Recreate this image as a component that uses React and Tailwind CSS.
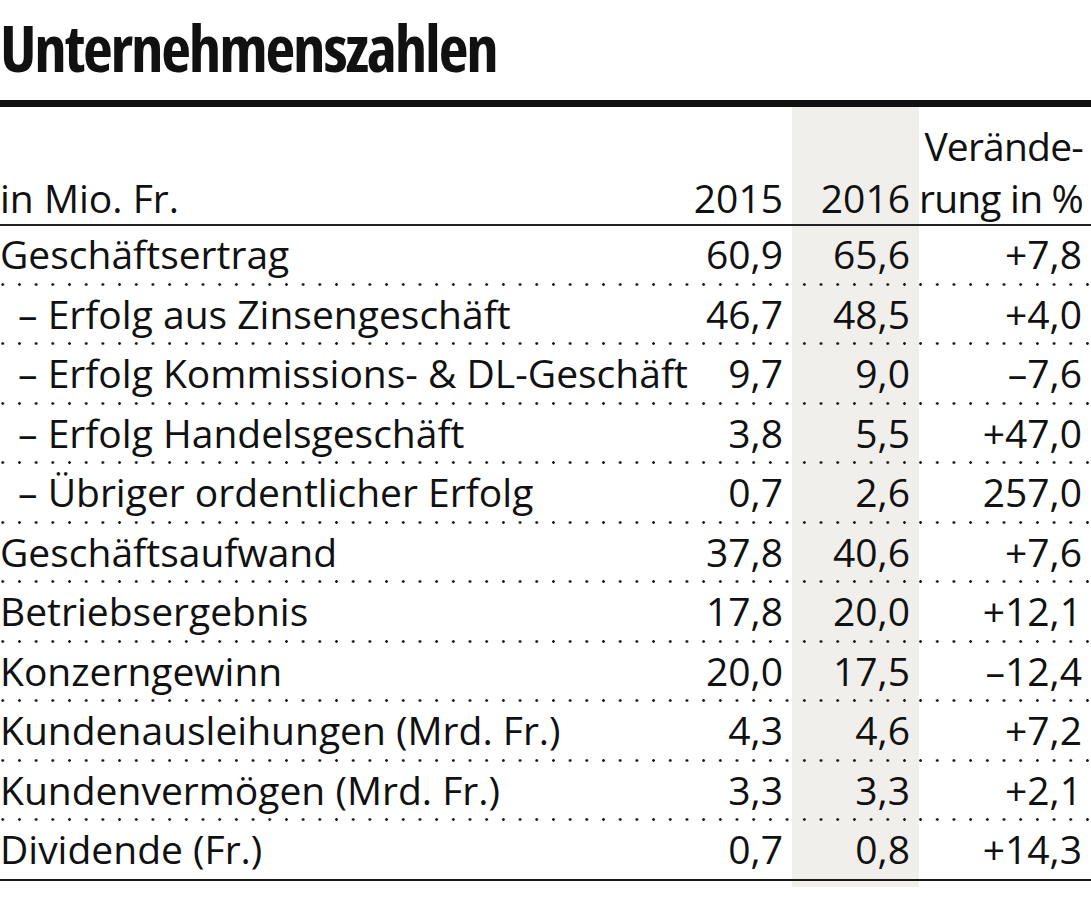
const rows = [
  { label: 'Geschäftsertrag', a: '60,9', b: '65,6', c: '+7,8' },
  { label: '– Erfolg aus Zinsengeschäft', a: '46,7', b: '48,5', c: '+4,0', sub: true },
  { label: '– Erfolg Kommissions- & DL-Geschäft', a: '9,7', b: '9,0', c: '–7,6', sub: true },
  { label: '– Erfolg Handelsgeschäft', a: '3,8', b: '5,5', c: '+47,0', sub: true },
  { label: '– Übriger ordentlicher Erfolg', a: '0,7', b: '2,6', c: '257,0', sub: true },
  { label: 'Geschäftsaufwand', a: '37,8', b: '40,6', c: '+7,6' },
  { label: 'Betriebsergebnis', a: '17,8', b: '20,0', c: '+12,1' },
  { label: 'Konzerngewinn', a: '20,0', b: '17,5', c: '–12,4' },
  { label: 'Kundenausleihungen (Mrd. Fr.)', a: '4,3', b: '4,6', c: '+7,2' },
  { label: 'Kundenvermögen (Mrd. Fr.)', a: '3,3', b: '3,3', c: '+2,1' },
  { label: 'Dividende (Fr.)', a: '0,7', b: '0,8', c: '+14,3' },
]

const cols = 'grid grid-cols-[1fr_100px_127px_172px]'

function Row({ row, last }) {
  // dotted rule under every row, solid rule under the last one
  const rule = last
    ? 'border-b-2 border-[#1a1a1a]'
    : 'bg-[radial-gradient(circle,#1a1a1a_1.1px,transparent_1.6px)] bg-[length:16.7px_3px] bg-repeat-x bg-[position:-5.6px_100%]'
  const shadeDots = last
    ? 'bg-[#f0efeb]'
    : 'bg-[#f0efeb] bg-[radial-gradient(circle,#1a1a1a_1.1px,transparent_1.6px)] bg-[length:16.7px_3px] bg-repeat-x bg-[position:4px_100%]'

  return (
    <div className={`${cols} h-[59.5px] leading-[55px] ${rule}`}>
      <div className={`whitespace-nowrap ${row.sub ? 'pl-[18px]' : ''}`}>{row.label}</div>
      <div className="text-right pr-[9px]">{row.a}</div>
      <div className={`text-right pr-[9px] ${shadeDots}`}>{row.b}</div>
      <div className="text-right pr-[9px]">{row.c}</div>
    </div>
  )
}

export default function App() {
  return (
    <div className="w-[1091px] h-[906px] bg-white text-[#111] font-['Open_Sans',sans-serif]">
      <div className="h-[100px] pt-[15px]">
        <h1 className="text-[65px] leading-[64px] font-[750] font-stretch-condensed tracking-[-2.2px]">
          Unternehmenszahlen
        </h1>
      </div>
      <div className="h-[7px] bg-[#111]" />

      <div className={`${cols} h-[119px] border-b-2 border-[#222] text-[39px] leading-[52px]`}>
        <div className="self-end whitespace-nowrap">in Mio. Fr.</div>
        <div className="self-end text-right pr-[9px]">2015</div>
        <div className="flex items-end justify-end pr-[9px] bg-[#f0efeb]">2016</div>
        <div className="self-end text-right pr-[8px] whitespace-nowrap tracking-[-0.8px]">
          Verände-
          <br />
          rung in %
        </div>
      </div>

      <div className="text-[39px]">
        {rows.map((r, i) => (
          <Row key={r.label} row={r} last={i === rows.length - 1} />
        ))}
      </div>

      <div className={`${cols} h-[6px]`}>
        <div />
        <div />
        <div className="bg-[#f0efeb]" />
        <div />
      </div>
    </div>
  )
}
